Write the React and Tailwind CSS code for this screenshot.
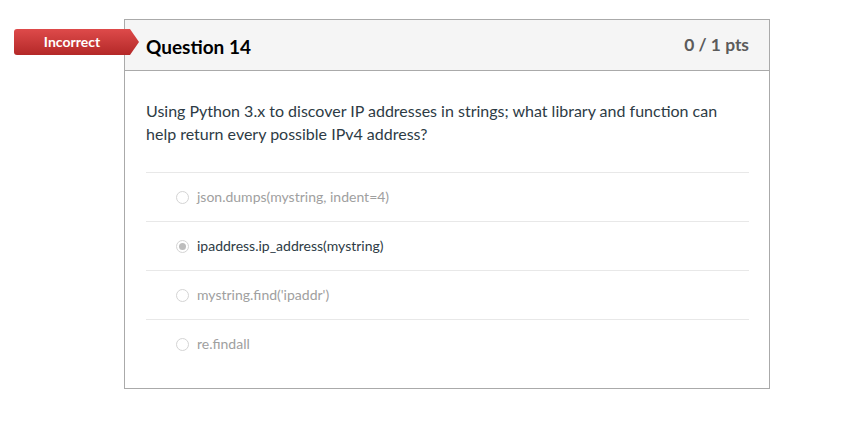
import React from "react";

const answers = [
  { text: "json.dumps(mystring, indent=4)", selected: false },
  { text: "ipaddress.ip_address(mystring)", selected: true },
  { text: "mystring.find('ipaddr')", selected: false },
  { text: "re.findall", selected: false },
];

function Radio({ selected }) {
  return (
    <span className="w-[13px] h-[13px] rounded-full border border-[#d4d4d4] bg-white flex items-center justify-center shrink-0">
      {selected && <span className="w-[7px] h-[7px] rounded-full bg-[#bdbdbd]" />}
    </span>
  );
}

export default function App() {
  return (
    <div className="w-[844px] h-[426px] bg-white relative font-['Lato',sans-serif] pt-[19px] pl-[124px]">
      <div className="w-[646px] h-[370px] border border-[#aaaaaa] flex flex-col">
        <div className="h-[51px] bg-[#f5f5f5] border-b border-[#aaaaaa] flex items-center justify-between pl-[21px] pr-[20px] shrink-0">
          <span className="text-[19px] font-bold text-[#000] leading-none pt-[2px]">Question 14</span>
          <span className="text-[17.4px] font-bold text-[#5b5b5b] leading-none">0 / 1 pts</span>
        </div>
        <div className="pl-[21px] pr-[20px] pt-[28px] pb-[19px]">
          <p className="text-[16px] leading-[23px] text-[#2d3b45] m-0">
            Using Python 3.x to discover IP addresses in strings; what library and function can
            <br />
            help return every possible IPv4 address?
          </p>
          <div className="mt-[27px]">
            {answers.map((a) => (
              <div
                key={a.text}
                className="h-[49px] border-t border-[#e8e8e8] flex items-center pl-[30px] gap-[8px]"
              >
                <Radio selected={a.selected} />
                <span
                  className={
                    "text-[14px] leading-none " +
                    (a.selected ? "text-[#2d3b45]" : "text-[#a0a0a0]")
                  }
                >
                  {a.text}
                </span>
              </div>
            ))}
          </div>
        </div>
      </div>
      <div className="absolute left-[14px] top-[29px] w-[125px] h-[26px] rounded-l-[3px] bg-gradient-to-b from-[#de4a4a] to-[#b42828] [clip-path:polygon(0_0,calc(100%-9px)_0,100%_50%,calc(100%-9px)_100%,0_100%)] flex items-center justify-center pr-[9px]">
        <span className="text-white text-[14px] font-bold leading-none">Incorrect</span>
      </div>
    </div>
  );
}
